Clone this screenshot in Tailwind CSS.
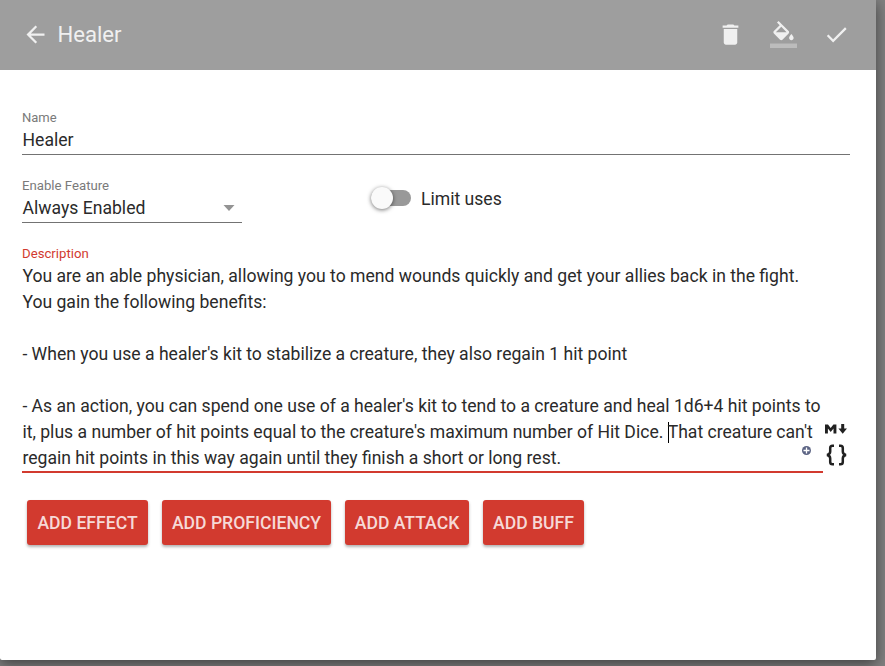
<!DOCTYPE html>
<html lang="en">
<head>
<meta charset="utf-8">
<title>Healer</title>
<script src="https://cdn.jsdelivr.net/npm/@tailwindcss/browser@4"></script>
</head>
<body class="w-[885px] h-[666px] overflow-hidden bg-[#808080] font-[Roboto,sans-serif] text-[#2a2a2a]">
<main class="w-[876px] h-[660px] bg-white rounded-[2px] shadow-[0_4px_14px_rgba(0,0,0,.5)] flex flex-col">
  <header class="h-[70px] shrink-0 bg-[#9e9e9e] flex items-center pb-[2px] pl-[22px] pr-[26px] text-[#f0f0f0]">
    <svg class="w-[27px] h-[27px]" viewBox="0 0 24 24" fill="currentColor"><path d="M20 11H7.830l5.590-5.590L12 4l-8 8 8 8 1.410-1.410L7.830 13H20v-2z"/></svg>
    <h1 class="ml-[8.500px] text-[22.100px] leading-[30px] grow">Healer</h1>
    <svg class="w-[27px] h-[27px] mt-px" viewBox="0 0 24 24" fill="currentColor"><path d="M6 19c0 1.100.9 2 2 2h8c1.100 0 2-.9 2-2V7H6v12zM19 4h-3.500l-1-1h-5l-1 1H5v2h14V4z"/></svg>
    <svg class="w-[27px] h-[27px] ml-[26px]" viewBox="0 0 24 24" fill="currentColor"><path d="M16.560 8.940L7.620 0 6.210 1.410l2.380 2.380-5.150 5.150c-.59.59-.59 1.540 0 2.120l5.500 5.500c.29.29.68.44 1.060.44s.77-.15 1.060-.44l5.500-5.500c.59-.58.59-1.530 0-2.120zM5.210 10L10 5.210 14.790 10H5.210zM19 11.500s-2 2.170-2 3.500c0 1.100.9 2 2 2s2-.9 2-2c0-1.330-2-3.500-2-3.500z"/><path fill-opacity=".36" d="M0 20h24v4H0z"/></svg>
    <svg class="w-[27px] h-[27px] ml-[26px]" viewBox="0 0 24 24" fill="currentColor"><path d="M9 16.170L4.830 12l-1.420 1.410L9 19 21 7l-1.410-1.410z"/></svg>
  </header>
  <section class="pt-[38px] pl-[22px] pr-[26px]">
    <div class="h-[47px] border-b border-[#737373]">
      <label class="block text-[13px] leading-[20px] text-[#7a7a7a]">Name</label>
      <div class="pl-[0.500px] text-[17.600px] leading-[24px]">Healer</div>
    </div>
    <div class="flex mt-[21px]">
      <div class="w-[220px] h-[47px] border-b border-[#737373]">
        <label class="block text-[13.200px] leading-[20px] text-[#7a7a7a]">Enable Feature</label>
        <div class="flex items-center justify-between text-[17.600px] leading-[24px] pl-[0.500px] pr-[7px]">Always Enabled
          <svg class="w-[12px] h-[6px]" viewBox="0 0 12 6" fill="#949494"><path d="M0.500 0h11L6 6z"/></svg>
        </div>
      </div>
      <div class="flex items-center h-[46px] ml-[129px]">
        <div class="w-[40px] h-[16px] mb-[2px] rounded-full bg-[#999] flex items-center">
          <div class="w-[22px] h-[22px] shrink-0 rounded-full bg-[#fafafa] shadow-[0_1px_4px_rgba(0,0,0,.55)]"></div>
        </div>
        <span class="ml-[10px] text-[17.600px] leading-[24px]">Limit uses</span>
      </div>
    </div>
    <div class="flex mt-[21px]">
      <div class="w-[801px] h-[229px] border-b-2 border-[#d23a2f] relative">
        <label class="block text-[13.200px] leading-[20px] text-[#d23a2f]">Description</label>
        <div class="pl-[0.400px] text-[17.590px] leading-[26px] whitespace-pre -mt-px">You are an able physician, allowing you to mend wounds quickly and get your allies back in the fight.
You gain the following benefits:

- When you use a healer's kit to stabilize a creature, they also regain 1 hit point

- As an action, you can spend one use of a healer's kit to tend to a creature and heal 1d6+4 hit points to
it, plus a number of hit points equal to the creature's maximum number of Hit Dice. <span class="inline-block w-px h-[21px] -mr-px align-[-5px] bg-black"></span>That creature can't
regain hit points in this way again until they finish a short or long rest.</div>
        <svg class="absolute right-[12px] bottom-[16px] w-[9px] h-[9px]" viewBox="0 0 9 9"><circle cx="4.500" cy="4.500" r="4.500" fill="#5c6484"/><path d="M4.500 1.500v6M1.500 4.500h6" stroke="#fff" stroke-width="1.300"/></svg>
      </div>
      <div class="flex flex-col pt-[180px] ml-[2px]">
        <svg class="w-[22px] h-[10px]" viewBox="0 0 22 10" fill="#212121"><path d="M0 9.500V.5h3l2.700 3.600L8.400.5h3v9H8.500V4.600L5.700 8 2.900 4.600v4.900zM16.200 0h3v4.500H22L17.700 9.700 13.400 4.500h2.800z"/></svg>
        <svg class="w-[22px] h-[22px] mt-[10px]" viewBox="0 0 22 22" fill="none" stroke="#212121" stroke-width="2.500"><path d="M9 1.700H7.500C5.800 1.700 5.200 2.700 5.200 4v3.500c0 2-.8 3-3.200 3.500 2.400.5 3.200 1.500 3.200 3.500V18c0 1.300.6 2.300 2.300 2.300H9M14 1.700h1.500c1.700 0 2.300 1 2.300 2.300v3.500c0 2 .8 3 3.200 3.500-2.400.5-3.200 1.500-3.200 3.500V18c0 1.300-.6 2.300-2.300 2.300H14"/></svg>
      </div>
    </div>
    <div class="flex gap-[14px] mt-[27px] pl-[5px] text-[17.600px] font-medium text-[#f6d9d7]">
      <button class="w-[121px] h-[45px] pt-[2px] rounded-[3px] bg-[#d23a2f] shadow-[0_2px_3px_rgba(0,0,0,.3)] whitespace-nowrap">ADD EFFECT</button>
      <button class="w-[169px] h-[45px] pt-[2px] rounded-[3px] bg-[#d23a2f] shadow-[0_2px_3px_rgba(0,0,0,.3)] whitespace-nowrap">ADD PROFICIENCY</button>
      <button class="w-[124px] h-[45px] pt-[2px] rounded-[3px] bg-[#d23a2f] shadow-[0_2px_3px_rgba(0,0,0,.3)] whitespace-nowrap">ADD ATTACK</button>
      <button class="w-[101px] h-[45px] pt-[2px] rounded-[3px] bg-[#d23a2f] shadow-[0_2px_3px_rgba(0,0,0,.3)] whitespace-nowrap">ADD BUFF</button>
    </div>
  </section>
</main>
</body>
</html>
